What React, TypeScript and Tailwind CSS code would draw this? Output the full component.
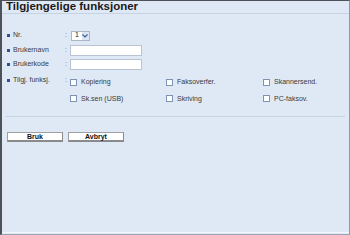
import React from "react";

const Label = ({ children }: { children: React.ReactNode }) => (
  <div className="flex items-center w-[58px] shrink-0">
    <span className="w-[3px] h-[3px] bg-[#2b4f9e] mr-[3px]" />
    <span>{children}</span>
  </div>
);

const Colon = () => <span className="w-[5px] text-[#777] shrink-0">:</span>;

const Check = ({ label }: { label: string }) => (
  <label className="flex items-center gap-[4px]">
    <span className="w-[7px] h-[7px] border border-[#7f94b3] bg-white" />
    <span>{label}</span>
  </label>
);

export default function App() {
  return (
    <div
      className="w-[350px] h-[235px] bg-[#dfe9f5] border-t border-l-2 border-[#4d5158] border-r border-r-[#8e9aa7] border-b border-b-[#9aa5b1] flex flex-col text-[#3a3a3a] text-[7px]"
      style={{ fontFamily: '"Liberation Sans", Arial, sans-serif' }}
    >
      <div className="h-[13px] border-b border-[#c6d3e2] pl-[4px] flex items-center">
        <h1 className="text-[11.5px] font-bold text-[#1a1a1a] leading-none">
          Tilgjengelige funksjoner
        </h1>
      </div>

      <div className="pl-[5px] pt-[16px] flex flex-col">
        <div className="flex items-center h-[11px]">
          <Label>Nr.</Label>
          <Colon />
          <div className="flex items-center h-[10px] border border-[#a9b7c8] bg-white ml-[1px]">
            <span className="px-[3px] text-[7px] text-[#222]">1</span>
            <span className="w-[7px] h-full bg-[#dbe4f0] flex items-center justify-center">
              <svg width="6" height="4" viewBox="0 0 6 4">
                <path d="M0.5 0.5 L3 3 L5.5 0.5" fill="none" stroke="#3a5d9c" strokeWidth="1.2" />
              </svg>
            </span>
          </div>
        </div>

        <div className="flex items-center h-[11px] mt-[4px]">
          <Label>Brukernavn</Label>
          <Colon />
          <div className="w-[72px] h-[11px] bg-white border border-[#b8c4d3]" />
        </div>

        <div className="flex items-center h-[11px] mt-[3px]">
          <Label>Brukerkode</Label>
          <Colon />
          <div className="w-[72px] h-[11px] bg-white border border-[#b8c4d3]" />
        </div>

        <div className="flex items-start mt-[5px]">
          <div className="flex items-center h-[11px]">
            <Label>Tilgj. funksj.</Label>
            <Colon />
          </div>
          <div className="grid grid-cols-[96px_97px_80px] gap-y-[6px] ml-[0px] pt-[2px]">
            <Check label="Kopiering" />
            <Check label="Faksoverfer." />
            <Check label="Skannersend." />
            <Check label="Sk.sen (USB)" />
            <Check label="Skriving" />
            <Check label="PC-faksov." />
          </div>
        </div>
      </div>

      <div className="mt-[12px] mx-[4px] border-b border-[#c6d3e2]" />

      <div className="flex gap-[5px] pl-[5px] mt-[15px]">
        <button className="w-[56px] h-[10px] bg-white border border-[#a0a0a0] border-b-2 border-b-[#8a8a8a] border-r-[#8a8a8a] text-[7px] font-bold text-[#111] leading-none">
          Bruk
        </button>
        <button className="w-[56px] h-[10px] bg-white border border-[#a0a0a0] border-b-2 border-b-[#8a8a8a] border-r-[#8a8a8a] text-[7px] font-bold text-[#111] leading-none">
          Avbryt
        </button>
      </div>

      <div className="flex-1" />
      <div className="h-[1px] bg-[#f3f7fb]" />
      <div className="h-[1px]" />
    </div>
  );
}
